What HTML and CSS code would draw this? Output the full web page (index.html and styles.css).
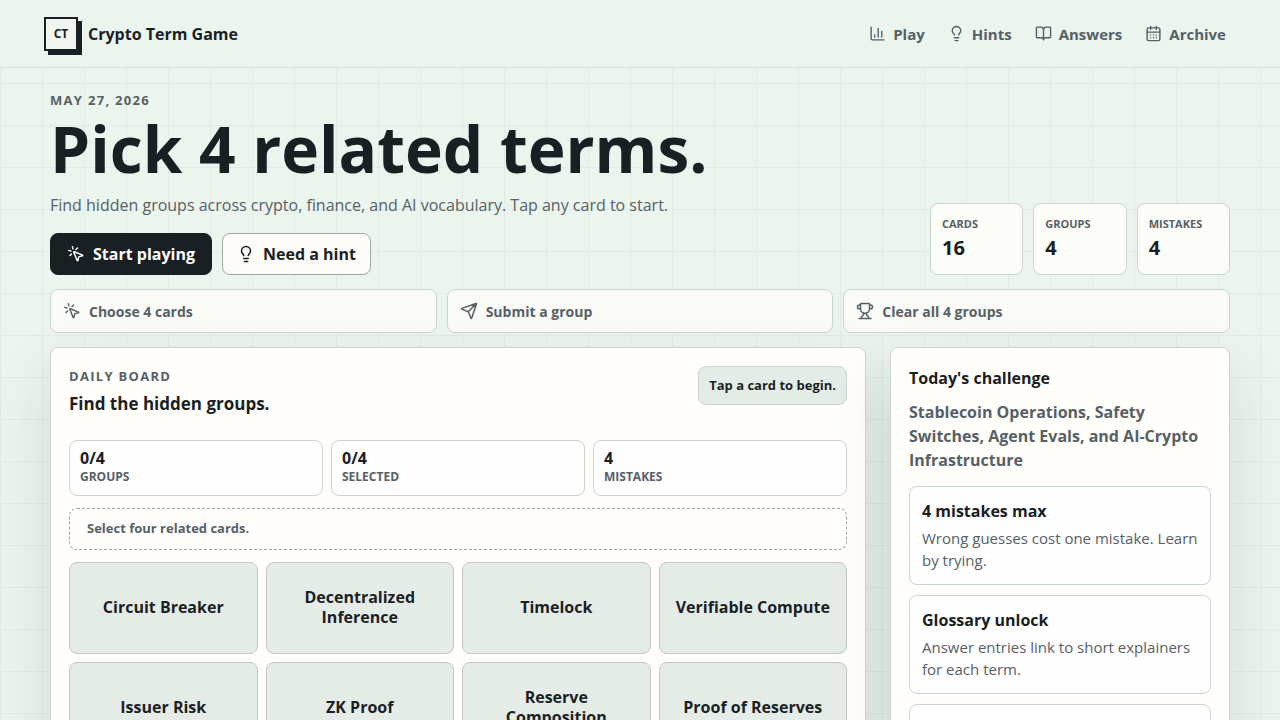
FILE: index.html
```html
<!DOCTYPE html>
<html lang="en">
<head>
<meta charset="utf-8">
<meta name="viewport" content="width=device-width, initial-scale=1">
<title>Crypto Term Game</title>
<link rel="stylesheet" href="styles.css">
</head>
<body>
<svg class="sprite" aria-hidden="true">
  <symbol id="i-chart" viewBox="0 0 24 24"><path d="M3 3v16a2 2 0 0 0 2 2h16M18 17V9M13 17V5M8 17v-3"/></symbol>
  <symbol id="i-bulb" viewBox="0 0 24 24"><path d="M15 14c.2-1 .7-1.7 1.5-2.5 1-.9 1.500-2.200 1.500-3.500A6 6 0 0 0 6 8c0 1 .2 2.200 1.500 3.500.7.7 1.300 1.500 1.500 2.500M9 18h6M10 22h4"/></symbol>
  <symbol id="i-book" viewBox="0 0 24 24"><path d="M12 7v14M3 18a1 1 0 0 1-1-1V4a1 1 0 0 1 1-1h5a4 4 0 0 1 4 4 4 4 0 0 1 4-4h5a1 1 0 0 1 1 1v13a1 1 0 0 1-1 1h-6a3 3 0 0 0-3 3 3 3 0 0 0-3-3z"/></symbol>
  <symbol id="i-calendar" viewBox="0 0 24 24"><path d="M8 2v4M16 2v4M3 10h18M8 14h.01M12 14h.01M16 14h.01M8 18h.01M12 18h.01M16 18h.01"/><rect width="18" height="18" x="3" y="4" rx="2"/></symbol>
  <symbol id="i-click" viewBox="0 0 24 24"><path d="M14 4.100 12 6M5.100 8l-2.900-.8M6 12l-1.900 2M7.200 2.200 8 5.100M9.037 9.690a.498.498 0 0 1 .653-.653l11 4.500a.5.5 0 0 1-.074.949l-4.349 1.041a1 1 0 0 0-.740.739l-1.040 4.350a.5.5 0 0 1-.950.074z"/></symbol>
  <symbol id="i-send" viewBox="0 0 24 24"><path d="M14.536 21.686a.5.5 0 0 0 .937-.024l6.500-19a.496.496 0 0 0-.635-.635l-19 6.500a.5.5 0 0 0-.024.937l7.930 3.180a2 2 0 0 1 1.112 1.110zM21.854 2.147l-10.940 10.939"/></symbol>
  <symbol id="i-trophy" viewBox="0 0 24 24"><path d="M6 9H4.500a2.500 2.500 0 0 1 0-5H6M18 9h1.500a2.500 2.500 0 0 0 0-5H18M4 22h16M10 14.660V17c0 .55-.47.98-.97 1.210C7.850 18.750 7 20.240 7 22M14 14.660V17c0 .55.47.98.97 1.210C16.150 18.750 17 20.240 17 22M18 2H6v7a6 6 0 0 0 12 0V2Z"/></symbol>
</svg>

<header class="topbar">
  <a class="brand" href="#"><span class="brand-mark">CT</span><span>Crypto Term Game</span></a>
  <nav class="nav">
    <a href="#play"><svg class="icon"><use href="#i-chart"/></svg>Play</a>
    <a href="#hints"><svg class="icon"><use href="#i-bulb"/></svg>Hints</a>
    <a href="#answers"><svg class="icon"><use href="#i-book"/></svg>Answers</a>
    <a href="#archive"><svg class="icon"><use href="#i-calendar"/></svg>Archive</a>
  </nav>
</header>

<main class="page">
  <section class="hero">
    <div class="hero-copy">
      <p class="eyebrow">MAY 27, 2026</p>
      <h1>Pick 4 related terms.</h1>
      <p class="lead">Find hidden groups across crypto, finance, and AI vocabulary. Tap any card to start.</p>
      <div class="actions">
        <button class="btn btn-dark" type="button"><svg class="icon"><use href="#i-click"/></svg>Start playing</button>
        <button class="btn" type="button"><svg class="icon"><use href="#i-bulb"/></svg>Need a hint</button>
      </div>
    </div>
    <dl class="facts">
      <div><dt>CARDS</dt><dd>16</dd></div>
      <div><dt>GROUPS</dt><dd>4</dd></div>
      <div><dt>MISTAKES</dt><dd>4</dd></div>
    </dl>
  </section>

  <ol class="steps">
    <li><svg class="icon"><use href="#i-click"/></svg>Choose 4 cards</li>
    <li><svg class="icon"><use href="#i-send"/></svg>Submit a group</li>
    <li><svg class="icon"><use href="#i-trophy"/></svg>Clear all 4 groups</li>
  </ol>

  <div class="columns">
    <section class="panel" id="play">
      <div class="board-head">
        <div>
          <p class="eyebrow">DAILY BOARD</p>
          <h2>Find the hidden groups.</h2>
        </div>
        <p class="status">Tap a card to begin.</p>
      </div>
      <div class="scores">
        <div><strong>0/4</strong><span>GROUPS</span></div>
        <div><strong>0/4</strong><span>SELECTED</span></div>
        <div><strong>4</strong><span>MISTAKES</span></div>
      </div>
      <p class="tray">Select four related cards.</p>
      <div class="cards">
        <button type="button">Circuit Breaker</button>
        <button type="button">Decentralized Inference</button>
        <button type="button">Timelock</button>
        <button type="button">Verifiable Compute</button>
        <button type="button">Issuer Risk</button>
        <button type="button">ZK Proof</button>
        <button type="button">Reserve Composition</button>
        <button type="button">Proof of Reserves</button>
      </div>
    </section>

    <aside class="panel side">
      <h2>Today's challenge</h2>
      <p class="topic">Stablecoin Operations, Safety Switches, Agent Evals, and AI-Crypto Infrastructure</p>
      <div class="notes">
        <article><h3>4 mistakes max</h3><p>Wrong guesses cost one mistake. Learn by trying.</p></article>
        <article><h3>Glossary unlock</h3><p>Answer entries link to short explainers for each term.</p></article>
        <article class="note-empty"></article>
      </div>
    </aside>
  </div>
</main>
</body>
</html>
```
FILE: styles.css
```css
:root {
  --ink: #1a1f24;
  --muted: #566066;
  --line: #c9d5cd;
  --mint: #ebf5ee;
  --paper: #fffefa;
  --tile: #e5ece8;
}

* { box-sizing: border-box; }

html { overflow: hidden; height: 100%; }

body {
  margin: 0;
  height: 100%;
  overflow: hidden;
  color: var(--ink);
  font-family: "Open Sans", sans-serif;
  font-size: 16px;
  line-height: 24px;
  background-color: var(--mint);
  background-image:
    linear-gradient(0deg, #e3e9e6 1px, transparent 1px),
    linear-gradient(90deg, #e3e9e6 1px, transparent 1px);
  background-size: 42px 42px;
}

h1, h2, h3, p, dl, dd, ol { margin: 0; padding: 0; }

button { font: inherit; color: inherit; }

.sprite { display: none; }

.icon {
  flex: none;
  width: 18px;
  height: 18px;
  fill: none;
  stroke: currentColor;
  stroke-width: 2;
  stroke-linecap: round;
  stroke-linejoin: round;
}

.topbar {
  display: flex;
  align-items: center;
  justify-content: space-between;
  height: 68px;
  padding: 0 44px;
  background: var(--mint);
  border-bottom: 1px solid #d8e0db;
}

.brand {
  display: flex;
  align-items: center;
  gap: 10px;
  color: inherit;
  font-weight: 700;
  text-decoration: none;
}

.brand-mark {
  display: grid;
  place-items: center;
  width: 34px;
  height: 34px;
  border: 2px solid var(--ink);
  background: #f0f5f0;
  box-shadow: 4px 4px 0 var(--ink);
  font-size: 12px;
  line-height: 16px;
}

.nav { display: flex; gap: 3px; }

.nav a {
  display: flex;
  align-items: center;
  gap: 7px;
  padding: 8px 10px;
  color: var(--muted);
  font-size: 15px;
  line-height: 22px;
  font-weight: 700;
  text-decoration: none;
}

.nav .icon { width: 17px; height: 17px; }

.page {
  display: grid;
  gap: 14px;
  max-width: 1280px;
  margin: 0 auto;
  padding: 22px 50px 50px;
}

.hero {
  display: grid;
  grid-template-columns: 1fr 300px;
  align-items: end;
  gap: 24px;
}

.eyebrow {
  color: var(--muted);
  font-size: 13px;
  line-height: 20px;
  font-weight: 700;
  letter-spacing: 0.1em;
}

h1 {
  margin-top: 7px;
  font-size: 64px;
  line-height: 64px;
  font-weight: 700;
}

.lead {
  margin-top: 11px;
  color: var(--muted);
  font-size: 16px;
  line-height: 26px;
}

.actions { display: flex; gap: 10px; margin-top: 15px; }

.btn {
  display: flex;
  align-items: center;
  gap: 8px;
  height: 42px;
  padding: 0 14px;
  border: 1px solid #9da9a3;
  border-radius: 8px;
  background: #fdfcf9;
  font-weight: 700;
}

.btn-dark { padding: 0 16px; border-color: var(--ink); background: var(--ink); color: var(--paper); }

.facts { display: grid; grid-template-columns: repeat(3, 1fr); gap: 10px; }

.facts div {
  height: 72px;
  padding: 11px;
  border: 1px solid var(--line);
  border-radius: 8px;
  background: #fcfcf8;
}

.facts dt { color: var(--muted); font-size: 11px; line-height: 18px; font-weight: 700; }

.facts dd { margin-top: 2px; font-size: 20px; line-height: 26px; font-weight: 700; }

.steps {
  display: grid;
  grid-template-columns: repeat(3, 1fr);
  gap: 10px;
  list-style: none;
}

.steps li {
  display: flex;
  align-items: center;
  gap: 8px;
  height: 44px;
  padding: 0 12px;
  border: 1px solid var(--line);
  border-radius: 8px;
  background: #fafbf7;
  color: var(--muted);
  font-size: 14px;
  line-height: 21px;
  font-weight: 700;
}

.columns {
  display: grid;
  grid-template-columns: 1fr 340px;
  gap: 24px;
}

.panel {
  min-height: 520px;
  padding: 18px;
  border: 1px solid var(--line);
  border-radius: 8px;
  background: var(--paper);
  box-shadow: 0 24px 60px rgba(26, 31, 36, 0.12);
}

.board-head {
  display: flex;
  align-items: flex-start;
  justify-content: space-between;
  min-height: 74px;
}

.board-head h2 { margin-top: 5px; font-size: 17px; line-height: 26px; }

.status {
  padding: 8px 10px;
  border: 1px solid var(--line);
  border-radius: 8px;
  background: var(--tile);
  font-size: 13px;
  line-height: 21px;
  font-weight: 700;
}

.scores { display: grid; grid-template-columns: repeat(3, 1fr); gap: 8px; }

.scores div {
  display: flex;
  flex-direction: column;
  height: 56px;
  padding: 8px 10px;
  border: 1px solid var(--line);
  border-radius: 8px;
  background: #fffefe;
}

.scores strong { line-height: 18px; }

.scores span { color: var(--muted); font-size: 12px; line-height: 20px; font-weight: 700; }

.tray {
  margin: 12px 0;
  padding: 9px 17px 11px;
  border: 1px dashed #9da6a1;
  border-radius: 8px;
  background: #fffefd;
  color: var(--muted);
  font-size: 13px;
  line-height: 20px;
  font-weight: 700;
}

.cards { display: grid; grid-template-columns: repeat(4, 1fr); gap: 8px; }

.cards button {
  height: 92px;
  padding: 7px 14px 9px;
  border: 1px solid #c6c6bd;
  border-radius: 8px;
  background: var(--tile);
  line-height: 20px;
  font-weight: 700;
}

.side h2 { font-size: 16px; line-height: 24px; }

.topic { margin-top: 10px; color: var(--muted); font-weight: 700; }

.notes { display: grid; gap: 10px; margin-top: 14px; }

.notes article {
  padding: 12px 12px 13px;
  border: 1px solid var(--line);
  border-radius: 8px;
  background: #fffefe;
}

.notes h3 { font-size: 16px; line-height: 24px; }

.notes p { margin-top: 4px; color: var(--muted); font-size: 15px; line-height: 22px; }

.note-empty { height: 98px; }
```
